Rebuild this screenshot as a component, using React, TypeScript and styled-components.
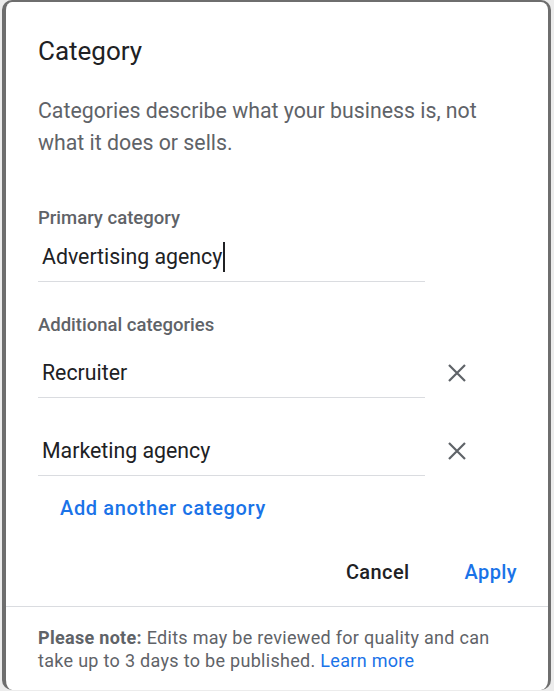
import React from "react";
import styled, { createGlobalStyle } from "styled-components";

const Global = createGlobalStyle`
  html, body { margin: 0; padding: 0; background: #ececec; }
  body { font-family: Roboto, "Liberation Sans", Arial, sans-serif; }
  * { box-sizing: border-box; }
`;

const Frame = styled.div`
  width: 554px;
  height: 691px;
  padding: 0 2px;
  overflow: hidden;
`;

const Card = styled.div`
  width: 549px;
  height: 690px;
  background: #fff;
  border-style: solid;
  border-color: #6e6e6e;
  border-width: 2px 3px 0 4px;
  border-radius: 10px;
  display: flex;
  flex-direction: column;
`;

const Body = styled.div`
  padding: 32px 32px 0 32px;
  display: flex;
  flex-direction: column;
`;

const Title = styled.h2`
  margin: 0;
  font-size: 26px;
  line-height: 34px;
  font-weight: 400;
  color: #202124;
`;

const Desc = styled.p`
  margin: 27px 0 0 0;
  font-size: 21.3px;
  line-height: 32px;
  color: #5f6368;
`;

const Label = styled.div<{ $top: number }>`
  margin-top: ${(p) => p.$top}px;
  font-size: 18.5px;
  font-weight: 500;
  line-height: 24px;
  color: #5f6368;
`;

const Row = styled.div<{ $top: number }>`
  display: flex;
  align-items: flex-start;
  gap: 19px;
  margin-top: ${(p) => p.$top}px;
`;

const Field = styled.div<{ $top?: number }>`
  width: 387px;
  margin-top: ${(p) => p.$top ?? 0}px;
  border-bottom: 1px solid #dadce0;
  padding: 0 0 8px 4px;
  font-size: 21.3px;
  line-height: 32px;
  color: #202124;
  display: flex;
  align-items: center;
`;

const Caret = styled.span`
  display: inline-block;
  width: 1.5px;
  height: 30px;
  background: #202124;
  margin-left: 1px;
`;

const RemoveButton = styled.button`
  border: 0;
  background: transparent;
  padding: 0;
  width: 26px;
  height: 26px;
  margin-top: 3px;
  display: flex;
  align-items: center;
  justify-content: center;
  cursor: pointer;
`;

const AddLink = styled.a`
  margin: 20px 0 0 22px;
  font-size: 20px;
  font-weight: 500;
  letter-spacing: 0.65px;
  line-height: 24px;
  color: #1a73e8;
  text-decoration: none;
  align-self: flex-start;
`;

const Actions = styled.div`
  display: flex;
  justify-content: flex-end;
  align-items: flex-start;
  gap: 55px;
  padding: 0 31px 0 0;
  margin-top: 38px;
  height: 48px;
`;

const ActionButton = styled.button<{ $primary?: boolean }>`
  border: 0;
  background: transparent;
  padding: 0;
  font-family: Roboto, "Liberation Sans", Arial, sans-serif;
  font-size: 20px;
  font-weight: 500;
  letter-spacing: 0.4px;
  color: ${(p) => (p.$primary ? "#1a73e8" : "#202124")};
  height: 28px;
  line-height: 28px;
  cursor: pointer;
`;

const Footer = styled.div`
  border-top: 1px solid #dadce0;
  padding: 19px 32px 0 32px;
  font-size: 18px;
  letter-spacing: 0.3px;
  line-height: 23px;
  color: #5f6368;
`;

const Strong = styled.strong`
  font-weight: 700;
`;

const Learn = styled.a`
  color: #1a73e8;
  text-decoration: none;
`;

const CloseIcon = () => (
  <svg width="20" height="20" viewBox="0 0 20 20" aria-hidden>
    <path d="M2 2 L18 18 M18 2 L2 18" stroke="#5f6368" strokeWidth="2.2" fill="none" />
  </svg>
);

export default function App() {
  return (
    <>
      <Global />
      <Frame>
        <Card>
          <Body>
            <Title>Category</Title>
            <Desc>Categories describe what your business is, not what it does or sells.</Desc>
            <Label $top={47}>Primary category</Label>
            <Field $top={11}>
              Advertising agency
              <Caret />
            </Field>
            <Label $top={31}>Additional categories</Label>
            <Row $top={20}>
              <Field>Recruiter</Field>
              <RemoveButton aria-label="Remove Recruiter">
                <CloseIcon />
              </RemoveButton>
            </Row>
            <Row $top={37}>
              <Field>Marketing agency</Field>
              <RemoveButton aria-label="Remove Marketing agency">
                <CloseIcon />
              </RemoveButton>
            </Row>
            <AddLink href="#">Add another category</AddLink>
          </Body>
          <Actions>
            <ActionButton>Cancel</ActionButton>
            <ActionButton $primary>Apply</ActionButton>
          </Actions>
          <Footer>
            <Strong>Please note:</Strong> Edits may be reviewed for quality and can take up to 3 days to be
            published. <Learn href="#">Learn more</Learn>
          </Footer>
        </Card>
      </Frame>
    </>
  );
}
